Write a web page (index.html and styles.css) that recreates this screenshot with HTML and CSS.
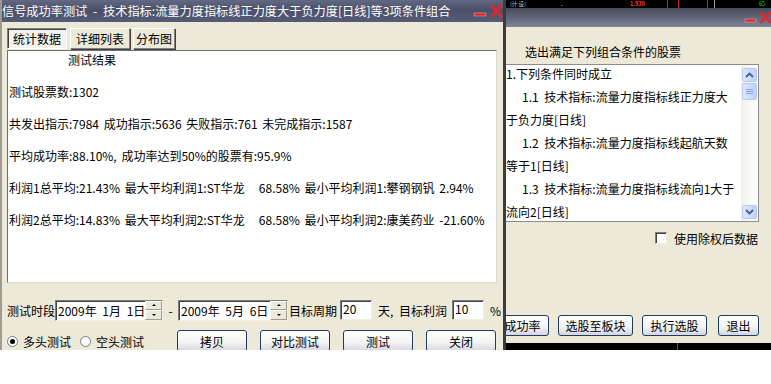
FILE: index.html
```html
<!DOCTYPE html>
<html lang="zh-CN">
<head>
  <meta charset="UTF-8" />
  <meta name="viewport" content="width=device-width, initial-scale=1.0"/>
  <title>信号成功率测试</title>
  <link rel="stylesheet" href="styles.css">
</head>
<body>

  <div class="desktop">

    <!-- stock chart behind the dialogs -->
    <div class="chart">
      <span class="chart-text chart-name">(计 设)</span>
      <span class="chart-text chart-dot">.</span>
      <span class="chart-text chart-price">1.930</span>
      <span class="chart-line line-1"></span>
      <span class="chart-line line-2"></span>
      <span class="chart-line line-3"></span>
      <span class="chart-line line-4"></span>
      <span class="chart-text chart-vol">65</span>
      <span class="chart-line line-5"></span>
    </div>

    <!-- stock picker dialog (behind) -->
    <div class="win win-pick">
      <div class="titlebar titlebar-pick">
        <span class="title"></span>
        <svg class="win-ctrl ctrl-pick" width="28" height="19" viewBox="0 0 28 19">
          <rect x="1" y="11" width="11" height="3" fill="#e3262b" stroke="#f6c9c9" stroke-width="0.4"/>
          <path d="M16 4 L27 15 M27 4 L16 15" stroke="#e3262b" stroke-width="2.4" fill="none"/>
        </svg>
      </div>
      <div class="pick-body">
        <div class="pick-caption">选出满足下列组合条件的股票</div>
        <div class="listbox">
          <div class="list-lines">
            <div class="list-line">1.下列条件同时成立</div>
            <div class="list-line indent">1.1 技术指标:流量力度指标线正力度大</div>
            <div class="list-line">于负力度[日线]</div>
            <div class="list-line indent">1.2 技术指标:流量力度指标线起航天数</div>
            <div class="list-line">等于1[日线]</div>
            <div class="list-line indent">1.3 技术指标:流量力度指标线流向1大于</div>
            <div class="list-line">流向2[日线]</div>
          </div>
          <div class="vscroll">
            <div class="sb-btn">
              <svg width="9" height="6" viewBox="0 0 9 6"><path d="M1 5 L4.5 1.5 L8 5" stroke="#4d6185" stroke-width="1.8" fill="none"/></svg>
            </div>
            <div class="sb-thumb">
              <span class="grip"></span><span class="grip"></span><span class="grip"></span>
            </div>
            <div class="sb-track"></div>
            <div class="sb-btn">
              <svg width="9" height="6" viewBox="0 0 9 6"><path d="M1 1 L4.5 4.5 L8 1" stroke="#4d6185" stroke-width="1.8" fill="none"/></svg>
            </div>
          </div>
        </div>
        <div class="check-row">
          <span class="checkbox"></span>
          <span>使用除权后数据</span>
        </div>
        <div class="pick-buttons">
          <button class="btn btn-rate">测试成功率</button>
          <button class="btn btn-block">选股至板块</button>
          <button class="btn btn-run">执行选股</button>
          <button class="btn btn-exit">退出</button>
        </div>
      </div>
    </div>

    <!-- signal success rate test dialog (active) -->
    <div class="win win-test">
      <div class="titlebar titlebar-test">
        <span class="title">信号成功率测试 - 技术指标:流量力度指标线正力度大于负力度[日线]等3项条件组合</span>
        <svg class="win-ctrl" width="30" height="22" viewBox="0 0 30 22">
          <rect x="1" y="13" width="12" height="3" fill="#e3262b" stroke="#f6c9c9" stroke-width="0.4"/>
          <path d="M18 5 L29 17 M29 5 L18 17" stroke="#e3262b" stroke-width="2.6" fill="none"/>
        </svg>
      </div>

      <div class="test-body">
        <div class="tabs">
          <button class="tab active">统计数据</button>
          <button class="tab">详细列表</button>
          <button class="tab tab-narrow">分布图</button>
        </div>

        <div class="result">
          <div class="result-title">测试结果</div>
          <div>测试股票数:1302</div>
          <div>共发出指示:7984 成功指示:5636 失败指示:761 未完成指示:1587</div>
          <div>平均成功率:88.10%, 成功率达到50%的股票有:95.9%</div>
          <div>利润1总平均:21.43% 最大平均利润1:ST华龙   68.58% 最小平均利润1:攀钢钢钒 2.94%</div>
          <div>利润2总平均:14.83% 最大平均利润2:ST华龙   68.58% 最小平均利润2:康美药业 -21.60%</div>
        </div>

        <div class="ctrl-row">
          <span class="lbl lbl-period">测试时段</span>
          <div class="date-box">
            <span class="date-text">2009年 1月 1日</span>
            <div class="spin"><span class="spin-btn"><i class="arr-up"></i></span><span class="spin-btn"><i class="arr-down"></i></span></div>
          </div>
          <span class="dash">-</span>
          <div class="date-box date-box-wide">
            <span class="date-text">2009年 5月 6日</span>
            <div class="spin"><span class="spin-btn"><i class="arr-up"></i></span><span class="spin-btn"><i class="arr-down"></i></span></div>
          </div>
          <span class="lbl lbl-cycle">目标周期</span>
          <div class="num-box">20</div>
          <span class="lbl lbl-profit">天, 目标利润</span>
          <div class="num-box">10</div>
          <span class="lbl lbl-pct">%</span>
        </div>

        <div class="ctrl-row ctrl-row-2">
          <span class="radio on"></span>
          <span class="radio-lbl">多头测试</span>
          <span class="radio radio-2"></span>
          <span class="radio-lbl">空头测试</span>
          <div class="test-buttons">
            <button class="btn btn-test">拷贝</button>
            <button class="btn btn-test">对比测试</button>
            <button class="btn btn-test">测试</button>
            <button class="btn btn-test">关闭</button>
          </div>
        </div>
      </div>
    </div>

  </div>

</body>
</html>
```

FILE: styles.css
```css
body {
  margin: 0;
  background: #ffffff;
  font-family: "Noto Sans CJK SC", "Noto Sans", sans-serif;
  font-size: 12px;
  color: #000000;
}

.desktop {
  position: relative;
  width: 771px;
  height: 350px;
  overflow: hidden;
}

/* background chart */
.chart {
  position: absolute;
  left: 0;
  top: 0;
  width: 771px;
  height: 350px;
  background: #000000;
}

.chart-text {
  position: absolute;
  top: 0;
  font-size: 5.5px;
  line-height: 8px;
  white-space: nowrap;
}

.chart-name { left: 510px; color: #c8c8c8; }
.chart-dot { left: 561px; color: #ffffff; }
.chart-price { left: 630px; color: #ff3c3c; font-weight: bold; }
.chart-vol { left: 759px; color: #16d916; }

.chart-line {
  position: absolute;
  top: 0;
  width: 1px;
  height: 8px;
  background: #d02020;
}

.line-1 { left: 667px; }
.line-2 { left: 678px; }
.line-3 { left: 707px; }
.line-4 { left: 714px; background: #a0a0a0; }
.line-5 { left: 677px; top: 343px; }

/* windows */
.win {
  position: absolute;
  background: #ece9d8;
}

.win-test {
  left: 0;
  top: 0;
  width: 506px;
  height: 360px;
  box-sizing: border-box;
  border-left: 2px solid #9d9b94;
  border-right: 3px solid #3c3c3c;
  z-index: 2;
}

.win-pick {
  left: 440px;
  top: 8px;
  width: 336px;
  height: 335px;
  z-index: 1;
}

.titlebar {
  display: flex;
  align-items: center;
  justify-content: space-between;
  color: #ffffff;
}

.titlebar-test {
  height: 22px;
  background: linear-gradient(#626982, #4a5069 45%, #565c77);
}

.titlebar-pick {
  height: 19px;
  background: linear-gradient(#474c5e, #646879 55%, #80849a);
}

.title {
  font-size: 12.2px;
  line-height: 22px;
  white-space: pre;
  word-spacing: 3px;
}

.win-ctrl {
  flex: none;
  display: block;
}

.ctrl-pick {
  margin-right: 4px;
}

/* test dialog */
.test-body {
  padding: 6px 0 0 5px;
}

.tabs {
  display: flex;
  gap: 3px;
}

button {
  font-family: inherit;
  font-size: 12px;
  color: #000000;
  padding: 0;
  cursor: pointer;
}

.tab {
  width: 60px;
  height: 21px;
  background: #ece9d8;
  border: 1px solid;
  border-color: #ffffff #808080 #808080 #ffffff;
  box-shadow: 1px 1px 0 #404040;
}

.tab.active {
  border-color: #808080 #ffffff #ffffff #808080;
  background: #f4f3ee;
  box-shadow: inset 1px 1px 0 #404040;
}

.tab-narrow {
  width: 42px;
}

.result {
  margin-top: 1px;
  width: 490px;
  height: 233px;
  box-sizing: border-box;
  background: #ffffff;
  border: 1px solid;
  border-color: #6f6f6f #dcdad0 #dcdad0 #6f6f6f;
  padding: 1px 0 0 1px;
  display: flex;
  flex-direction: column;
  gap: 16px;
  line-height: 16px;
  white-space: pre;
  word-spacing: 2px;
}

.result-title {
  padding-left: 59px;
}

.ctrl-row {
  display: flex;
  align-items: center;
  height: 22px;
  margin-top: 16px;
  white-space: pre;
  word-spacing: 3px;
}

.ctrl-row-2 {
  margin-top: 9px;
}

.lbl-period { width: 48px; }
.lbl-cycle { width: 51px; margin-left: 1px; }
.lbl-profit { width: 74px; margin-left: 6px; }
.lbl-pct { margin-left: 6px; }

.date-box {
  display: flex;
  justify-content: space-between;
  width: 108px;
  height: 21px;
  box-sizing: border-box;
  background: #ffffff;
  border: 1px solid;
  border-color: #7f7f7f #f0efe8 #f0efe8 #7f7f7f;
  box-shadow: inset 1px 1px 0 #404040;
}

.date-box-wide {
  width: 110px;
}

.date-text {
  padding-left: 2px;
  line-height: 19px;
}

.spin {
  display: flex;
  flex-direction: column;
  width: 17px;
}

.spin-btn {
  flex: 1;
  display: flex;
  align-items: center;
  justify-content: center;
  background: #ece9d8;
  border: 1px solid;
  border-color: #ffffff #9d9b94 #9d9b94 #ffffff;
}

.arr-up,
.arr-down {
  width: 0;
  height: 0;
  border-left: 2px solid transparent;
  border-right: 2px solid transparent;
}

.arr-up { border-bottom: 2px solid #000000; }
.arr-down { border-top: 2px solid #000000; }

.dash {
  width: 15px;
  text-align: center;
}

.num-box {
  width: 32px;
  height: 20px;
  box-sizing: border-box;
  padding-left: 2px;
  line-height: 15px;
  background: #ffffff;
  border: 1px solid;
  border-color: #7f7f7f #f0efe8 #f0efe8 #7f7f7f;
  box-shadow: inset 1px 1px 0 #404040;
}

.radio {
  width: 11px;
  height: 11px;
  box-sizing: border-box;
  border-radius: 50%;
  border: 1px solid #7a7a7a;
  background: #ffffff;
}

.radio.on::after {
  content: "";
  display: block;
  width: 5px;
  height: 5px;
  margin: 2px;
  border-radius: 50%;
  background: #000000;
}

.radio-2 {
  margin-left: 9px;
}

.radio-lbl {
  margin-left: 5px;
}

.test-buttons {
  display: flex;
  gap: 13px;
  margin-left: 33px;
}

.btn {
  height: 22px;
  border: 1px solid #1e3c64;
  border-radius: 3px;
  background: linear-gradient(#ffffff, #f4f4f2 55%, #d6d6e2);
}

.btn-test { width: 70px; }

/* stock picker dialog */
.pick-body {
  height: 316px;
  box-sizing: border-box;
  padding-top: 17px;
}

.pick-caption {
  margin-left: 85px;
  line-height: 16px;
}

.listbox {
  display: flex;
  width: 255px;
  height: 158px;
  box-sizing: border-box;
  margin: 4px 0 0 64px;
  background: #ffffff;
  border: 1px solid #8c8c8c;
}

.list-lines {
  flex: 1;
  overflow: hidden;
}

.list-line {
  height: 23px;
  line-height: 18px;
  padding-left: 1px;
  white-space: pre;
}

.list-line.indent {
  padding-left: 17px;
  word-spacing: 3px;
}

.vscroll {
  width: 17px;
  box-sizing: border-box;
  padding: 3px 1px 2px 1px;
  display: flex;
  flex-direction: column;
  gap: 1px;
  background: linear-gradient(to right, #f3f1ec, #fefefb);
}

.sb-btn,
.sb-thumb {
  box-sizing: border-box;
  border: 1px solid #b6c8f4;
  border-radius: 2px;
  background: linear-gradient(to right, #dde7fe, #c0d1fa);
  display: flex;
  align-items: center;
  justify-content: center;
}

.sb-btn {
  height: 14px;
}

.sb-thumb {
  height: 17px;
  flex-direction: column;
  gap: 1px;
}

.grip {
  width: 7px;
  height: 1px;
  background: #8ca4dc;
}

.sb-track {
  flex: 1;
}

.check-row {
  display: flex;
  align-items: center;
  justify-content: flex-end;
  height: 16px;
  margin-top: 8px;
  padding-right: 18px;
}

.checkbox {
  width: 12px;
  height: 12px;
  box-sizing: border-box;
  margin-right: 7px;
  background: #ffffff;
  border: 1px solid;
  border-color: #7f7f7f #f0efe8 #f0efe8 #7f7f7f;
  box-shadow: inset 1px 1px 0 #404040;
}

.pick-buttons {
  display: flex;
  justify-content: flex-end;
  gap: 9px;
  margin-top: 69px;
  padding-right: 17px;
}

.pick-buttons .btn { height: 21px; }
.btn-rate { width: 77px; }
.btn-block { width: 75px; }
.btn-run { width: 65px; }
.btn-exit { width: 41px; margin-left: 2px; }
```
